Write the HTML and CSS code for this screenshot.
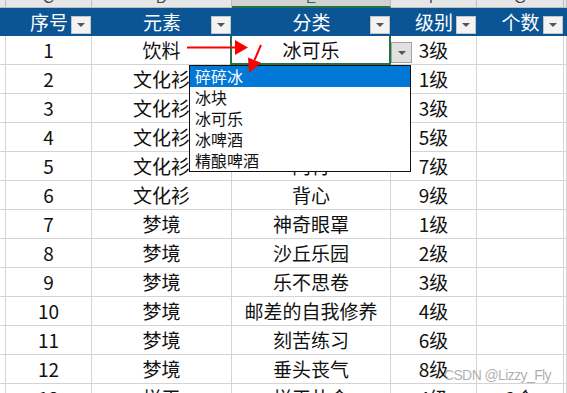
FILE: index.html
```html
<!DOCTYPE html>
<html lang="zh-CN">
<head>
  <meta charset="UTF-8">
  <meta name="viewport" content="width=device-width, initial-scale=1.0">
  <title>数据验证下拉列表</title>
  <link rel="stylesheet" href="styles.css">
</head>
<body>
  <div class="sheet">
    <div class="grid">
      <!-- column letters, mostly cut off at the top -->
      <div class="colhead"></div>
      <div class="colhead"><span>C</span></div>
      <div class="colhead"><span>D</span></div>
      <div class="colhead active"><span>E</span></div>
      <div class="colhead"><span>F</span></div>
      <div class="colhead"><span>G</span></div>
      <div class="colhead"></div>

      <!-- table header -->
      <div class="th"></div>
      <div class="th">序号<span class="filter"></span></div>
      <div class="th">元素<span class="filter"></span></div>
      <div class="th">分类<span class="filter"></span></div>
      <div class="th">级别<span class="filter"></span></div>
      <div class="th">个数<span class="filter"></span></div>
      <div class="th"></div>

      <div class="td"></div><div class="td">1</div><div class="td">饮料</div><div class="td sel">冰可乐<span class="cell-btn"></span></div><div class="td">3级</div><div class="td"></div><div class="td"></div>
      <div class="td"></div><div class="td">2</div><div class="td">文化衫</div><div class="td"></div><div class="td">1级</div><div class="td"></div><div class="td"></div>
      <div class="td"></div><div class="td">3</div><div class="td">文化衫</div><div class="td"></div><div class="td">3级</div><div class="td"></div><div class="td"></div>
      <div class="td"></div><div class="td">4</div><div class="td">文化衫</div><div class="td"></div><div class="td">5级</div><div class="td"></div><div class="td"></div>
      <div class="td"></div><div class="td">5</div><div class="td">文化衫</div><div class="td">内衬</div><div class="td">7级</div><div class="td"></div><div class="td"></div>
      <div class="td"></div><div class="td">6</div><div class="td">文化衫</div><div class="td">背心</div><div class="td">9级</div><div class="td"></div><div class="td"></div>
      <div class="td"></div><div class="td">7</div><div class="td">梦境</div><div class="td">神奇眼罩</div><div class="td">1级</div><div class="td"></div><div class="td"></div>
      <div class="td"></div><div class="td">8</div><div class="td">梦境</div><div class="td">沙丘乐园</div><div class="td">2级</div><div class="td"></div><div class="td"></div>
      <div class="td"></div><div class="td">9</div><div class="td">梦境</div><div class="td">乐不思卷</div><div class="td">3级</div><div class="td"></div><div class="td"></div>
      <div class="td"></div><div class="td">10</div><div class="td">梦境</div><div class="td">邮差的自我修养</div><div class="td">4级</div><div class="td"></div><div class="td"></div>
      <div class="td"></div><div class="td">11</div><div class="td">梦境</div><div class="td">刻苦练习</div><div class="td">6级</div><div class="td"></div><div class="td"></div>
      <div class="td"></div><div class="td">12</div><div class="td">梦境</div><div class="td">垂头丧气</div><div class="td">8级</div><div class="td"></div><div class="td"></div>
      <div class="td"></div><div class="td">13</div><div class="td">样王</div><div class="td">样王扑金</div><div class="td">4级</div><div class="td">2个</div><div class="td"></div>
    </div>

    <ul class="listbox">
      <li class="on">碎碎冰</li>
      <li>冰块</li>
      <li>冰可乐</li>
      <li>冰啤酒</li>
      <li>精酿啤酒</li>
    </ul>

    <svg class="arrows" width="567" height="393" viewBox="0 0 567 393">
      <line x1="187" y1="47.5" x2="237" y2="47.5" stroke="#f00" stroke-width="2"/>
      <polygon points="235,40 248,47.5 235,55" fill="#f00"/>
      <line x1="261" y1="45" x2="254.5" y2="60" stroke="#f00" stroke-width="2"/>
      <polygon points="249,73 248,57.4 261,62.8" fill="#f00"/>
    </svg>

    <div class="watermark">CSDN @Lizzy_Fly</div>
  </div>
</body>
</html>
```

FILE: styles.css
```css
* {
  box-sizing: border-box;
}
body {
  margin: 0;
  background-color: #fff;
  font-family: "Noto Sans CJK SC", "Noto Sans", sans-serif;
  color: #111;
  overflow: hidden;
}
.sheet {
  position: relative;
  width: 567px;
  height: 393px;
  overflow: hidden;
}
.grid {
  display: grid;
  grid-template-columns: 6px 86px 140px 159px 86px 87px 1fr;
  grid-template-rows: 8px 28px;
  grid-auto-rows: 29px;
}
.colhead {
  background-color: #e6e6e6;
  border-right: 1px solid #bdbdbd;
  border-bottom: 1px solid #bdbdbd;
  overflow: hidden;
  text-align: center;
  font-family: "Liberation Sans", sans-serif;
  font-size: 15px;
  line-height: 15px;
  color: #444;
}
.colhead span {
  display: block;
  margin-top: -10px;
}
.colhead.active {
  background-color: #d2d2d2;
  border-bottom: 2px solid #217346;
  color: #217346;
}
.th {
  position: relative;
  display: flex;
  align-items: center;
  justify-content: center;
  background-color: #0b5595;
  color: #fff;
  font-size: 19px;
  line-height: 28px;
}
.filter {
  position: absolute;
  right: 1px;
  top: 8px;
  width: 20px;
  height: 18px;
  background-color: #f3f3f3;
  border: 1px solid #c4c4c4;
}
.filter::after,
.cell-btn::after {
  content: "";
  position: absolute;
  left: 50%;
  top: 50%;
  margin: -2px 0 0 -4px;
  border-left: 4px solid transparent;
  border-right: 4px solid transparent;
  border-top: 4px solid #555;
}
.td {
  display: flex;
  align-items: center;
  justify-content: center;
  border-right: 1px solid #d4d4d4;
  border-bottom: 1px solid #d4d4d4;
  font-size: 19px;
  line-height: 28px;
  white-space: nowrap;
}
.td.sel {
  position: relative;
}
.td.sel::before {
  content: "";
  position: absolute;
  left: -2px;
  right: -1px;
  top: 0;
  bottom: -1px;
  border: 2px solid #217346;
  border-top: none;
}
.cell-btn {
  position: absolute;
  right: -22px;
  top: 6px;
  width: 21px;
  height: 21px;
  background-color: #e1e1e1;
  border: 1px solid #a3a3a3;
}
.listbox {
  position: absolute;
  left: 189px;
  top: 65px;
  width: 222px;
  height: 107px;
  margin: 0;
  padding: 0;
  list-style: none;
  background-color: #fff;
  border: 1px solid #111;
}
.listbox li {
  height: 21px;
  padding-left: 5px;
  font-size: 16px;
  line-height: 21px;
  color: #111;
}
.listbox li.on {
  background-color: #0078d7;
  color: #fff;
}
.arrows {
  position: absolute;
  left: 0;
  top: 0;
  pointer-events: none;
}
.watermark {
  position: absolute;
  right: 16px;
  top: 367px;
  font-family: "Liberation Sans", sans-serif;
  font-size: 14px;
  letter-spacing: -0.6px;
  color: rgba(140, 140, 140, 0.7);
}
```
